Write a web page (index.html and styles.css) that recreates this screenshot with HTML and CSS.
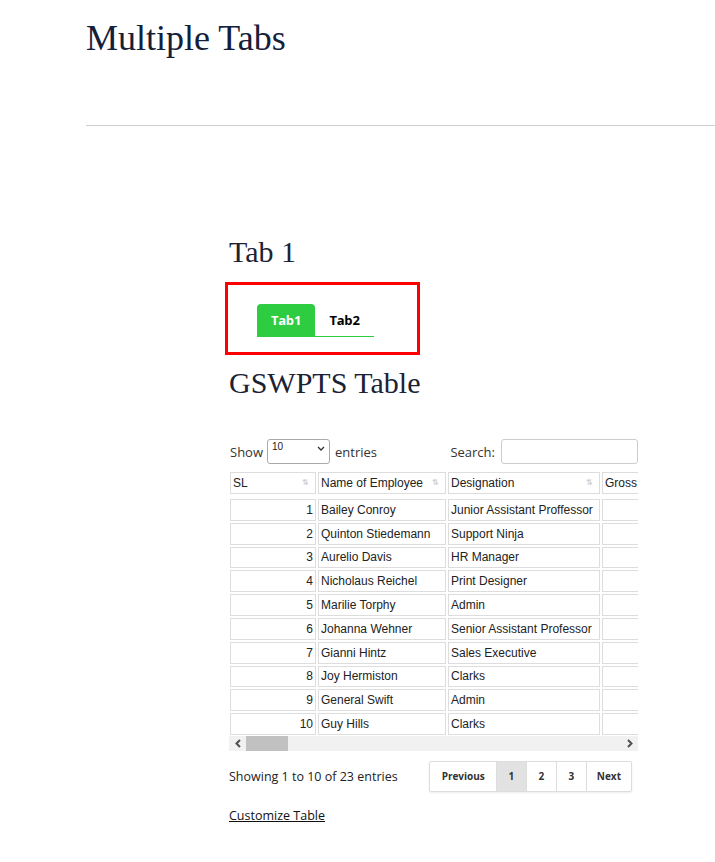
FILE: index.html
```html
<!DOCTYPE html>
<html>
<head>
<meta charset="utf-8">
<link rel="stylesheet" href="styles.css">
</head>
<body>
<header class="site-header">
  <h1 class="page-title">Multiple Tabs</h1>
</header>
<hr class="divider">
<main class="content">
  <h2 class="section-title">Tab 1</h2>
  <div class="tabs-box">
    <div class="tabs">
      <span class="tab tab-active">Tab1</span>
      <span class="tab">Tab2</span>
    </div>
  </div>
  <h2 class="section-title table-title">GSWPTS Table</h2>

  <div class="dt-controls">
    <label class="dt-length">Show
      <span class="select"><span class="select-val">10</span><svg class="chev" width="8" height="5" viewBox="0 0 8 5"><path d="M1 1l3 3 3-3" fill="none" stroke="#333" stroke-width="1.3"/></svg></span>
      entries</label>
    <label class="dt-search">Search: <span class="search-input"></span></label>
  </div>

  <div class="table-wrap">
    <table class="dt">
      <colgroup>
        <col class="c-sl"><col class="c-name"><col class="c-des"><col class="c-gross">
      </colgroup>
      <thead>
        <tr>
          <th>SL<span class="sort">⇅</span></th>
          <th>Name of Employee<span class="sort">⇅</span></th>
          <th>Designation<span class="sort">⇅</span></th>
          <th>Gross Salary<span class="sort">⇅</span></th>
        </tr>
      </thead>
      <tbody>
        <tr><td class="num">1</td><td>Bailey Conroy</td><td>Junior Assistant Proffessor</td><td></td></tr>
        <tr><td class="num">2</td><td>Quinton Stiedemann</td><td>Support Ninja</td><td></td></tr>
        <tr><td class="num">3</td><td>Aurelio Davis</td><td>HR Manager</td><td></td></tr>
        <tr><td class="num">4</td><td>Nicholaus Reichel</td><td>Print Designer</td><td></td></tr>
        <tr><td class="num">5</td><td>Marilie Torphy</td><td>Admin</td><td></td></tr>
        <tr><td class="num">6</td><td>Johanna Wehner</td><td>Senior Assistant Professor</td><td></td></tr>
        <tr><td class="num">7</td><td>Gianni Hintz</td><td>Sales Executive</td><td></td></tr>
        <tr><td class="num">8</td><td>Joy Hermiston</td><td>Clarks</td><td></td></tr>
        <tr><td class="num">9</td><td>General Swift</td><td>Admin</td><td></td></tr>
        <tr><td class="num">10</td><td>Guy Hills</td><td>Clarks</td><td></td></tr>
      </tbody>
    </table>
  </div>
  <div class="hscroll">
    <span class="arrow">
      <svg width="8" height="9" viewBox="0 0 8 9"><path d="M6 1L2.5 4.5 6 8" fill="none" stroke="#505050" stroke-width="2"/></svg>
    </span>
    <span class="thumb"></span>
    <span class="track"></span>
    <span class="arrow">
      <svg width="8" height="9" viewBox="0 0 8 9"><path d="M2 1l3.5 3.5L2 8" fill="none" stroke="#505050" stroke-width="2"/></svg>
    </span>
  </div>

  <div class="dt-footer">
    <div class="dt-info">Showing 1 to 10 of 23 entries</div>
    <div class="pager">
      <span class="pg">Previous</span>
      <span class="pg pg-num pg-current">1</span>
      <span class="pg pg-num">2</span>
      <span class="pg pg-num">3</span>
      <span class="pg">Next</span>
    </div>
  </div>

  <a class="customize" href="#">Customize Table</a>
</main>
</body>
</html>
```

FILE: styles.css
```css
html, body {
  margin: 0;
  padding: 0;
  background: #fff;
}
body {
  font-family: "Open Sans", "Noto Sans", sans-serif;
  color: #222;
}
.site-header {
  padding: 14px 0 0 86px;
  height: 125px;
  box-sizing: border-box;
}
.page-title {
  margin: 0;
  font-family: "Liberation Serif", serif;
  font-weight: normal;
  font-size: 36px;
  line-height: 48px;
  color: #14203a;
}
.divider {
  margin: 0 0 0 86px;
  border: 0;
  border-top: 1px solid #cfcfcf;
  height: 0;
}
.content {
  margin-left: 229px;
  width: 409px;
  padding-top: 108px;
}
.section-title {
  margin: 0;
  font-family: "Liberation Serif", serif;
  font-weight: normal;
  font-size: 30px;
  line-height: 36px;
  color: #1b2233;
}
.tabs-box {
  margin: 12px 0 10px -4px;
  width: 189px;
  height: 67px;
  border: 3px solid #f00;
  box-sizing: content-box;
  padding: 0;
}
.tabs {
  display: flex;
  margin: 19px 0 0 29px;
}
.tab {
  display: block;
  width: 59px;
  height: 32px;
  line-height: 32px;
  text-align: center;
  font-family: "Open Sans", sans-serif;
  font-weight: 700;
  font-size: 13px;
  letter-spacing: -0.2px;
  color: #000;
  border-bottom: 1px solid #2ecc40;
  box-sizing: content-box;
}
.tab-active {
  width: 58px;
  background: #2ecc40;
  color: #fff;
  border-radius: 4px 4px 0 0;
  height: 33px;
  border-bottom: 0;
}
.table-title {
  margin-bottom: 38px;
}
.dt-controls {
  display: flex;
  justify-content: space-between;
  align-items: center;
  font-family: "Open Sans", sans-serif;
  font-size: 13px;
  color: #333;
  height: 25px;
  margin-bottom: 8px;
}
.dt-length {
  display: flex;
  align-items: center;
  gap: 4px;
  margin-left: 1px;
}
.select {
  display: inline-block;
  position: relative;
  width: 61px;
  height: 23px;
  border: 1px solid #aaa;
  border-radius: 3px;
  box-sizing: content-box;
  margin-right: 1px;
}
.select-val {
  position: absolute;
  left: 4px;
  top: 1px;
  font-family: "Liberation Sans", sans-serif;
  font-size: 10px;
  line-height: 12px;
  color: #222;
}
.chev {
  position: absolute;
  right: 4px;
  top: 6px;
}
.dt-search {
  display: flex;
  align-items: center;
  gap: 6px;
}
.search-input {
  display: inline-block;
  width: 135px;
  height: 23px;
  border: 1px solid #ccc;
  border-radius: 3px;
}
.table-wrap {
  width: 409px;
  overflow: hidden;
}
.dt {
  border-collapse: separate;
  border-spacing: 2px;
  table-layout: fixed;
  width: 540px;
  margin: -2px 0 0 -1px;
  font-family: "Liberation Sans", Arial, sans-serif;
  font-size: 12px;
  color: #222;
}
.c-sl { width: 86px; }
.c-name { width: 128px; }
.c-des { width: 152px; }
.c-gross { width: 170px; }
.dt th, .dt td {
  border: 1px solid #ddd;
  padding: 0 2px;
  text-align: left;
  white-space: nowrap;
  overflow: hidden;
}
.dt th {
  font-weight: normal;
  height: 20px;
  position: relative;
}
.dt tbody::before {
  content: "";
  display: table-row;
  height: 1px;
}
.dt td {
  height: 19.8px;
}
.dt td.num {
  text-align: right;
}
.sort {
  position: absolute;
  right: 6px;
  top: 5px;
  font-size: 8px;
  color: #c8c8c8;
}
.hscroll {
  display: flex;
  height: 15px;
  width: 409px;
  background: #f1f1f1;
  margin-top: -1px;
}
.arrow {
  width: 17px;
  display: flex;
  align-items: center;
  justify-content: center;
}
.thumb {
  width: 42px;
  background: #c1c1c1;
}
.track {
  flex: 1;
}
.dt-footer {
  display: flex;
  justify-content: space-between;
  align-items: center;
  margin-top: 10px;
  width: 403px;
}
.dt-info {
  font-family: "Open Sans", sans-serif;
  font-size: 12.5px;
  color: #222;
}
.pager {
  display: flex;
  border: 1px solid #ddd;
  border-radius: 2px;
  box-shadow: 0 1px 2px rgba(0,0,0,0.08);
}
.pg {
  display: block;
  height: 29px;
  line-height: 29px;
  padding: 0 10px;
  font-family: "Open Sans", sans-serif;
  font-weight: 700;
  font-size: 10px;
  color: #333;
  border-left: 1px solid #ddd;
}
.pg:first-child {
  border-left: 0;
  padding: 0 11px 0 12px;
}
.pg-num {
  width: 29px;
  padding: 0;
  text-align: center;
}
.pg-current {
  background: #e2e2e2;
}
.customize {
  display: inline-block;
  margin-top: 15px;
  font-family: "Open Sans", sans-serif;
  font-size: 12.5px;
  color: #111;
  text-decoration: underline;
}
```
